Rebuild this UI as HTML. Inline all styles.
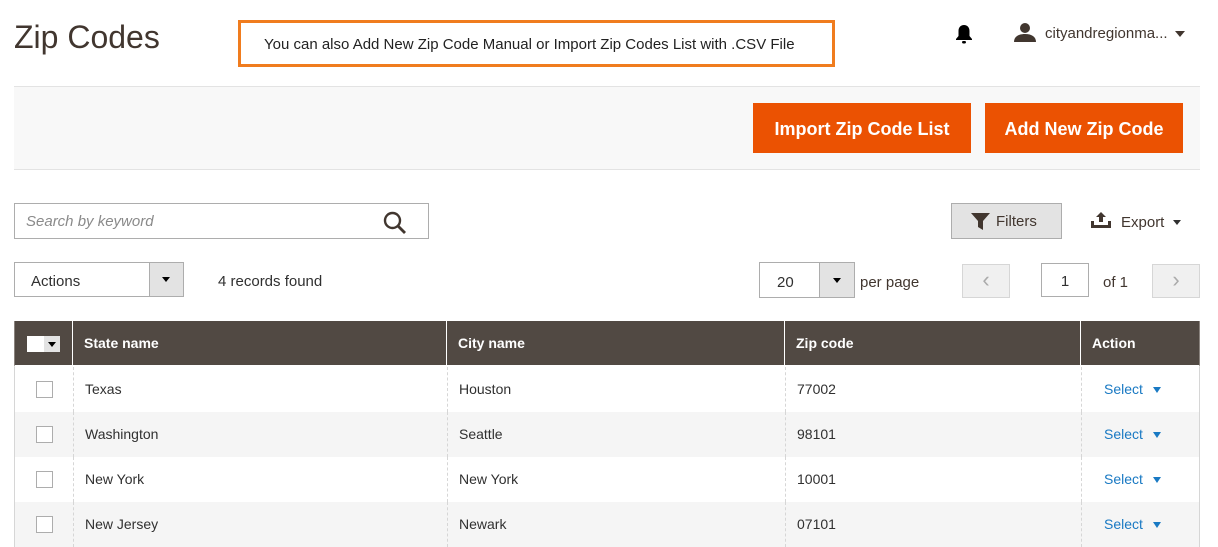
<!DOCTYPE html>
<html><head><meta charset="utf-8"><style>
*{box-sizing:border-box;margin:0;padding:0}
body{width:1218px;height:547px;overflow:hidden;background:#fff;font-family:"Liberation Sans",sans-serif;color:#303030;position:relative}
.a{position:absolute}
h1{position:absolute;left:14px;top:19px;font-size:32px;font-weight:400;color:#41362f}
.note{left:238px;top:20px;width:597px;height:47px;border:3px solid #f07c1e;font-size:15px;color:#222;padding-left:23px;line-height:43px}
.bar{left:14px;top:86px;width:1186px;height:84px;background:#f8f8f8;border-top:1px solid #e3e3e3;border-bottom:1px solid #e3e3e3}
.btn{background:#eb5202;color:#fff;font-size:18px;font-weight:700;text-align:center;line-height:52px;height:50px;top:103px}
.inp{border:1px solid #adadad;background:#fff}
.th{top:321px;height:46px;background:#514943;color:#fff;font-weight:700;font-size:14px;line-height:44px;padding-left:11px;border-right:1px solid #fff;border-bottom:2px solid #fff}
.row{left:14px;width:1186px;height:45px;font-size:14px;line-height:45px;border-left:1px solid #d6d6d6;border-right:1px solid #d6d6d6}
.row span{position:absolute;top:0}
.cb{position:absolute;left:21px;top:14px;width:17px;height:17px;border:1px solid #adadad;background:#fff}
.sel{color:#1979c3}
.tri{position:absolute;left:1138px;top:20px;border:4px solid transparent;border-top:6px solid #1979c3;border-bottom:0}
.dl{position:absolute;top:0;height:45px;border-left:1px dashed #d6d6d6}
</style></head><body>
<h1>Zip Codes</h1>
<div class="a note">You can also Add New Zip Code Manual or Import Zip Codes List with .CSV File</div>
<svg class="a" style="left:955px;top:24px" width="18" height="20" viewBox="0 0 18 20"><path d="M9 1c-3.5 0-5.5 2.5-5.5 6v5L1 15v1h16v-1l-2.5-3V7C14.5 3.5 12.5 1 9 1z" fill="#000"/><rect x="7" y="17" width="4" height="2.5" rx="1.2" fill="#000"/></svg>
<svg class="a" style="left:1014px;top:22px" width="22" height="20" viewBox="0 0 22 20"><circle cx="11" cy="6" r="5" fill="#41362f"/><path d="M0 20c0-5 4-8 11-8s11 3 11 8z" fill="#41362f"/></svg>
<div class="a" style="left:1045px;top:25px;font-size:15px;color:#41362f">cityandregionma...</div>
<div class="a" style="left:1175px;top:31px;border:5px solid transparent;border-top:6px solid #41362f;border-bottom:0;width:0;height:0"></div>
<div class="a bar"></div>
<div class="a btn" style="left:753px;width:218px">Import Zip Code List</div>
<div class="a btn" style="left:985px;width:198px">Add New Zip Code</div>
<div class="a inp" style="left:14px;top:203px;width:415px;height:36px"></div>
<div class="a" style="left:26px;top:213px;font-size:15px;font-style:italic;color:#8a8a8a">Search by keyword</div>
<svg class="a" style="left:383px;top:211px" width="24" height="24" viewBox="0 0 24 24"><circle cx="9.5" cy="9.5" r="7.5" fill="none" stroke="#41362f" stroke-width="2.4"/><path d="M15 15l7 7" stroke="#41362f" stroke-width="2.8"/></svg>
<div class="a" style="left:951px;top:203px;width:111px;height:36px;background:#e3e3e3;border:1px solid #adadad"></div>
<svg class="a" style="left:971px;top:213px" width="19" height="17" viewBox="0 0 19 17"><path d="M0 0h19L12 8v9l-5-3V8z" fill="#41362f"/></svg>
<div class="a" style="left:996px;top:213px;font-size:15px;color:#41362f">Filters</div>
<svg class="a" style="left:1091px;top:212px" width="20" height="16" viewBox="0 0 20 16"><path d="M10 0l5 5h-3v5H8V5H5z M0 9h3v4h14V9h3v7H0z" fill="#41362f"/></svg>
<div class="a" style="left:1121px;top:214px;font-size:15px;color:#41362f">Export</div>
<div class="a" style="left:1173px;top:220px;border:4px solid transparent;border-top:5px solid #303030;border-bottom:0"></div>
<div class="a inp" style="left:14px;top:262px;width:170px;height:35px"></div>
<div class="a" style="left:149px;top:263px;width:34px;height:33px;background:#e3e3e3;border-left:1px solid #adadad"></div>
<div class="a" style="left:162px;top:277px;border:4px solid transparent;border-top:5px solid #000;border-bottom:0"></div>
<div class="a" style="left:31px;top:273px;font-size:15px">Actions</div>
<div class="a" style="left:218px;top:273px;font-size:15px">4 records found</div>
<div class="a inp" style="left:759px;top:262px;width:96px;height:36px"></div>
<div class="a" style="left:819px;top:263px;width:35px;height:34px;background:#e3e3e3;border-left:1px solid #adadad"></div>
<div class="a" style="left:833px;top:278px;border:4px solid transparent;border-top:5px solid #000;border-bottom:0"></div>
<div class="a" style="left:777px;top:274px;font-size:15px">20</div>
<div class="a" style="left:860px;top:274px;font-size:15px;color:#41362f">per page</div>
<div class="a" style="left:962px;top:264px;width:48px;height:34px;background:#f0f0f0;border:1px solid #d6d6d6;color:#aaa;text-align:center;line-height:30px;font-size:22px">&#8249;</div>
<div class="a inp" style="left:1041px;top:263px;width:48px;height:34px;text-align:center;line-height:35px;font-size:15px">1</div>
<div class="a" style="left:1103px;top:274px;font-size:15px;color:#41362f">of 1</div>
<div class="a" style="left:1152px;top:264px;width:48px;height:34px;background:#f0f0f0;border:1px solid #d6d6d6;color:#aaa;text-align:center;line-height:30px;font-size:22px">&#8250;</div>
<div class="a th" style="left:14px;width:59px;border-left:1px solid #8a837e"></div>
<div class="a" style="left:27px;top:336px;width:17px;height:16px;background:#fff"></div>
<div class="a" style="left:44px;top:336px;width:16px;height:16px;background:#e3e3e3"></div>
<div class="a" style="left:48px;top:342px;border:4px solid transparent;border-top:5px solid #000;border-bottom:0"></div>
<div class="a th" style="left:73px;width:374px">State name</div>
<div class="a th" style="left:447px;width:338px">City name</div>
<div class="a th" style="left:785px;width:296px">Zip code</div>
<div class="a th" style="left:1081px;width:119px;border-right:1px solid #8a837e">Action</div>
<div class="a row" style="top:367px;background:#fff"><div class="cb"></div><div class="dl" style="left:58px"></div><div class="dl" style="left:432px"></div><div class="dl" style="left:770px"></div><div class="dl" style="left:1066px"></div><span style="left:70px">Texas</span><span style="left:444px">Houston</span><span style="left:782px">77002</span><span class="sel" style="left:1089px">Select</span><div class="tri"></div></div>
<div class="a row" style="top:412px;background:#f5f5f5"><div class="cb"></div><div class="dl" style="left:58px"></div><div class="dl" style="left:432px"></div><div class="dl" style="left:770px"></div><div class="dl" style="left:1066px"></div><span style="left:70px">Washington</span><span style="left:444px">Seattle</span><span style="left:782px">98101</span><span class="sel" style="left:1089px">Select</span><div class="tri"></div></div>
<div class="a row" style="top:457px;background:#fff"><div class="cb"></div><div class="dl" style="left:58px"></div><div class="dl" style="left:432px"></div><div class="dl" style="left:770px"></div><div class="dl" style="left:1066px"></div><span style="left:70px">New York</span><span style="left:444px">New York</span><span style="left:782px">10001</span><span class="sel" style="left:1089px">Select</span><div class="tri"></div></div>
<div class="a row" style="top:502px;background:#f5f5f5"><div class="cb"></div><div class="dl" style="left:58px"></div><div class="dl" style="left:432px"></div><div class="dl" style="left:770px"></div><div class="dl" style="left:1066px"></div><span style="left:70px">New Jersey</span><span style="left:444px">Newark</span><span style="left:782px">07101</span><span class="sel" style="left:1089px">Select</span><div class="tri"></div></div>
</body></html>
